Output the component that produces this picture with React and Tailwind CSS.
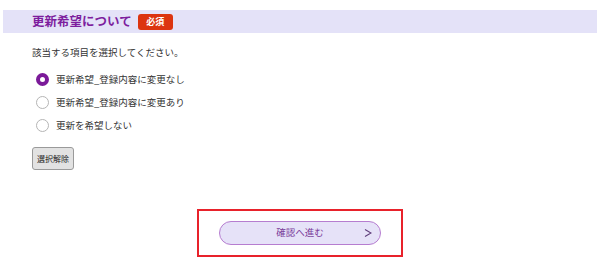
import { useState } from "react";

const options = [
  "更新希望_登録内容に変更なし",
  "更新希望_登録内容に変更あり",
  "更新を希望しない",
];

export default function App() {
  const [selected, setSelected] = useState(0);

  return (
    <main
      className="w-[600px] h-[265px] bg-white text-[#333]"
      style={{ fontFamily: '"Noto Sans CJK JP", "Noto Sans", sans-serif' }}
    >
      <div className="pt-[10px] px-[3px]">
        <div className="h-[23px] bg-[#e4e2f8] flex items-center pl-[29px] gap-[6px]">
          <h2 className="text-[12.5px] font-bold text-[#7d1e9e] leading-none">
            更新希望について
          </h2>
          <span className="h-[16px] w-[35px] bg-[#dc3410] rounded-[3px] text-white text-[9px] font-bold flex items-center justify-center leading-none">
            必須
          </span>
        </div>
      </div>

      <section className="pl-[32px]">
        <p className="mt-[12px] text-[9.5px] leading-[14px]">
          該当する項目を選択してください。
        </p>

        <div className="mt-[14px] flex flex-col gap-[10px] pl-[4px]">
          {options.map((label, i) => (
            <label
              key={label}
              className="flex items-center gap-[7px] h-[13px] cursor-pointer"
              onClick={() => setSelected(i)}
            >
              <span
                className={`w-[13px] h-[13px] rounded-full bg-white shrink-0 ${
                  selected === i
                    ? "border-[4px] border-[#7b1a99]"
                    : "border border-[#b5b5b5]"
                }`}
              />
              <span className="text-[9.5px] leading-none text-[#333]">
                {label}
              </span>
            </label>
          ))}
        </div>

        <button
          type="button"
          onClick={() => setSelected(null)}
          className="mt-[15px] w-[42px] h-[23px] bg-[#e2e2e2] border border-[#9a9a9a] rounded-[3px] text-[8px] text-[#222] flex items-center justify-center leading-none"
        >
          選択解除
        </button>
      </section>

      <div className="flex justify-center mt-[39px]">
        <div className="w-[206px] h-[48px] border-2 border-[#e8222b] flex items-center justify-center">
          <button
            type="button"
            className="relative w-[162px] h-[24px] rounded-full bg-[#e6e2f8] border border-[#b67dd0] text-[#7a3d9a] text-[9.5px] flex items-center justify-center leading-none"
          >
            確認へ進む
            <svg
              className="absolute right-[8px] top-1/2 -translate-y-1/2"
              width="8"
              height="9"
              viewBox="0 0 8 9"
              fill="none"
            >
              <path d="M1 1 L7 4.5 L1 8" stroke="#5e3d7a" strokeWidth="1.1" />
            </svg>
          </button>
        </div>
      </div>
    </main>
  );
}
